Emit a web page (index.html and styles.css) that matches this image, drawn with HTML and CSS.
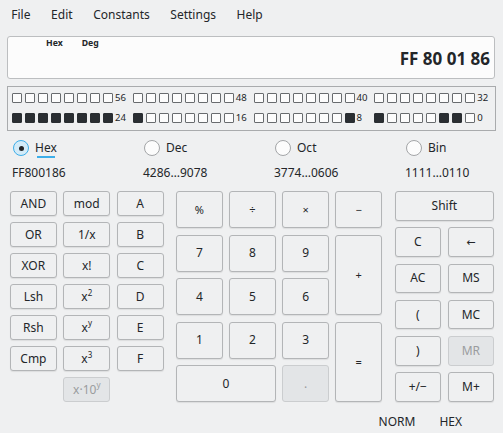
FILE: index.html
```html
<!DOCTYPE html>
<html>
<head>
<meta charset="utf-8">
<title>KCalc</title>
<link rel="stylesheet" href="styles.css">
</head>
<body>
<div class="app">
  <nav class="menubar">
    <span>File</span><span>Edit</span><span>Constants</span><span>Settings</span><span>Help</span>
  </nav>

  <div class="display">
    <div class="flags"><span>Hex</span><span>Deg</span></div>
    <div class="value">FF 80 01 86</div>
  </div>

  <div class="bits">
    <div class="bitrow">
      <div class="group"><span class="bit"></span><span class="bit"></span><span class="bit"></span><span class="bit"></span><span class="bit"></span><span class="bit"></span><span class="bit"></span><span class="bit"></span><span class="lbl">56</span></div>
      <div class="group"><span class="bit"></span><span class="bit"></span><span class="bit"></span><span class="bit"></span><span class="bit"></span><span class="bit"></span><span class="bit"></span><span class="bit"></span><span class="lbl">48</span></div>
      <div class="group"><span class="bit"></span><span class="bit"></span><span class="bit"></span><span class="bit"></span><span class="bit"></span><span class="bit"></span><span class="bit"></span><span class="bit"></span><span class="lbl">40</span></div>
      <div class="group"><span class="bit"></span><span class="bit"></span><span class="bit"></span><span class="bit"></span><span class="bit"></span><span class="bit"></span><span class="bit"></span><span class="bit"></span><span class="lbl">32</span></div>
    </div>
    <div class="bitrow">
      <div class="group"><span class="bit on"></span><span class="bit on"></span><span class="bit on"></span><span class="bit on"></span><span class="bit on"></span><span class="bit on"></span><span class="bit on"></span><span class="bit on"></span><span class="lbl">24</span></div>
      <div class="group"><span class="bit on"></span><span class="bit"></span><span class="bit"></span><span class="bit"></span><span class="bit"></span><span class="bit"></span><span class="bit"></span><span class="bit"></span><span class="lbl">16</span></div>
      <div class="group"><span class="bit"></span><span class="bit"></span><span class="bit"></span><span class="bit"></span><span class="bit"></span><span class="bit"></span><span class="bit"></span><span class="bit on"></span><span class="lbl">8</span></div>
      <div class="group"><span class="bit on"></span><span class="bit"></span><span class="bit"></span><span class="bit"></span><span class="bit"></span><span class="bit on"></span><span class="bit on"></span><span class="bit"></span><span class="lbl">0</span></div>
    </div>
  </div>

  <div class="bases">
    <label class="radio checked"><span class="circle"></span><span class="rtext focus">Hex</span></label>
    <label class="radio"><span class="circle"></span><span class="rtext">Dec</span></label>
    <label class="radio"><span class="circle"></span><span class="rtext">Oct</span></label>
    <label class="radio"><span class="circle"></span><span class="rtext">Bin</span></label>
  </div>
  <div class="basevals">
    <span>FF800186</span><span>4286…9078</span><span>3774…0606</span><span>1111…0110</span>
  </div>

  <div class="keypad">
    <div class="grp grp-fn">
      <button class="key">AND</button><button class="key">mod</button><button class="key">A</button>
      <button class="key">OR</button><button class="key">1/x</button><button class="key">B</button>
      <button class="key">XOR</button><button class="key">x!</button><button class="key">C</button>
      <button class="key">Lsh</button><button class="key">x<sup>2</sup></button><button class="key">D</button>
      <button class="key">Rsh</button><button class="key">x<sup class="y">y</sup></button><button class="key">E</button>
      <button class="key">Cmp</button><button class="key">x<sup>3</sup></button><button class="key">F</button>
      <span></span><button class="key off">x·10<sup class="y">y</sup></button><span></span>
    </div>
    <div class="grp grp-num">
      <button class="key op">%</button><button class="key op">÷</button><button class="key op">×</button><button class="key op">−</button>
      <button class="key">7</button><button class="key">8</button><button class="key">9</button><button class="key op tall">+</button>
      <button class="key">4</button><button class="key">5</button><button class="key">6</button>
      <button class="key">1</button><button class="key">2</button><button class="key">3</button><button class="key op tall">=</button>
      <button class="key wide">0</button><button class="key off">.</button>
    </div>
    <div class="grp grp-mem">
      <button class="key wide">Shift</button>
      <button class="key">C</button><button class="key op">←</button>
      <button class="key">AC</button><button class="key">MS</button>
      <button class="key">(</button><button class="key">MC</button>
      <button class="key">)</button><button class="key off">MR</button>
      <button class="key">+/−</button><button class="key">M+</button>
    </div>
  </div>

  <div class="status">
    <span>NORM</span><span>HEX</span>
  </div>
</div>
</body>
</html>
```

FILE: styles.css
```css
* { box-sizing: border-box; }
html, body { margin: 0; padding: 0; }
body {
  background: #eff0f1;
  font-family: "Noto Sans", "DejaVu Sans", sans-serif;
  font-size: 12px;
  color: #232629;
  width: 503px;
  height: 433px;
  overflow: hidden;
}
.app { display: flex; flex-direction: column; height: 433px; }

/* menu */
.menubar { display: flex; height: 30px; align-items: center; padding-left: 1px; }
.menubar span { padding: 0 10.3px; line-height: 30px; }

/* display */
.display {
  margin: 6px 8px 0 7px;
  height: 43px;
  background: #fcfcfc;
  border: 1px solid #bcbec0;
  border-radius: 3px;
  display: flex;
  flex-direction: column;
  justify-content: space-between;
  padding: 1px 4px 9px 38px;
}
.flags { display: flex; gap: 19px; font-size: 8.7px; font-weight: 700; line-height: 11px; }
.value { text-align: right; font-size: 17px; font-weight: 700; line-height: 20px; }

/* bits */
.bits {
  margin: 7px 7px 0 7px;
  height: 45px;
  border: 1px solid #a9abad;
  padding: 5px 0 0 4px;
  display: flex;
  flex-direction: column;
  gap: 8px;
}
.bitrow { display: flex; height: 12px; }
.group { display: flex; align-items: center; width: 121px; gap: 3px; }
.bit {
  width: 10px; height: 9.5px;
  border: 1.4px solid #686b6e;
  background: #fcfcfc;
  border-radius: 1px;
  flex: none;
}
.bit.on { background: #2a2e32; border-color: #2a2e32; }
.lbl { font-size: 9.6px; line-height: 12px; margin-left: -1px; }

/* base radios */
.bases {
  height: 34px;
  display: grid;
  grid-template-columns: 131px 131px 131px auto;
  padding-left: 13px;
  align-items: center;
}
.radio { display: flex; align-items: center; gap: 6px; }
.circle {
  width: 16px; height: 16px;
  border-radius: 50%;
  border: 1px solid #a3a5a7;
  background: #fcfcfc;
  position: relative;
  flex: none;
}
.radio.checked .circle { border-color: #3daee9; background: #d3ebf8; }
.radio.checked .circle::after {
  content: "";
  position: absolute;
  left: 4.5px; top: 4.5px;
  width: 5px; height: 5px;
  border-radius: 50%;
  background: #232629;
}
.rtext { line-height: 16px; }
.rtext.focus { box-shadow: 0 4px 0 -2px #3daee9; }
.basevals {
  height: 16px;
  display: grid;
  grid-template-columns: 131px 131px 131px auto;
  padding-left: 12px;
  line-height: 16px;
}

/* keypad */
.keypad {
  margin-top: 10px;
  padding-left: 10px;
  display: flex;
  gap: 12.6px;
  height: 211px;
}
.grp { display: grid; column-gap: 6.6px; }
.grp-fn { grid-template-columns: repeat(3, 46.8px); grid-template-rows: repeat(7, 25px); row-gap: 6px; }
.grp-num { grid-template-columns: repeat(4, 46.5px); grid-template-rows: repeat(5, 37px); row-gap: 6.5px; }
.grp-mem { grid-template-columns: repeat(2, 46.5px); grid-template-rows: repeat(6, 29.6px); row-gap: 6.7px; }
.key {
  font-family: inherit;
  font-size: 12px;
  color: #232629;
  background: #eff0f1;
  border: 1px solid #b3b5b7;
  border-radius: 3px;
  box-shadow: 0 1px 1px rgba(0,0,0,0.08);
  padding: 0;
  margin: 0;
  line-height: 14px;
}
.key sup { font-size: 8px; line-height: 0; vertical-align: 5px; }
.key sup.y { vertical-align: 6px; }
.key.off { background: #e3e5e7; border-color: #cbcdcf; color: #9a9c9e; box-shadow: none; }
.key.op { font-size: 11px; }
.key.tall { grid-row: span 2; }
.key.wide { grid-column: span 2; }

/* status bar */
.status {
  margin-top: 7px;
  height: 24px;
  display: flex;
  justify-content: flex-end;
  align-items: center;
  gap: 24px;
  padding-right: 41px;
}
```
